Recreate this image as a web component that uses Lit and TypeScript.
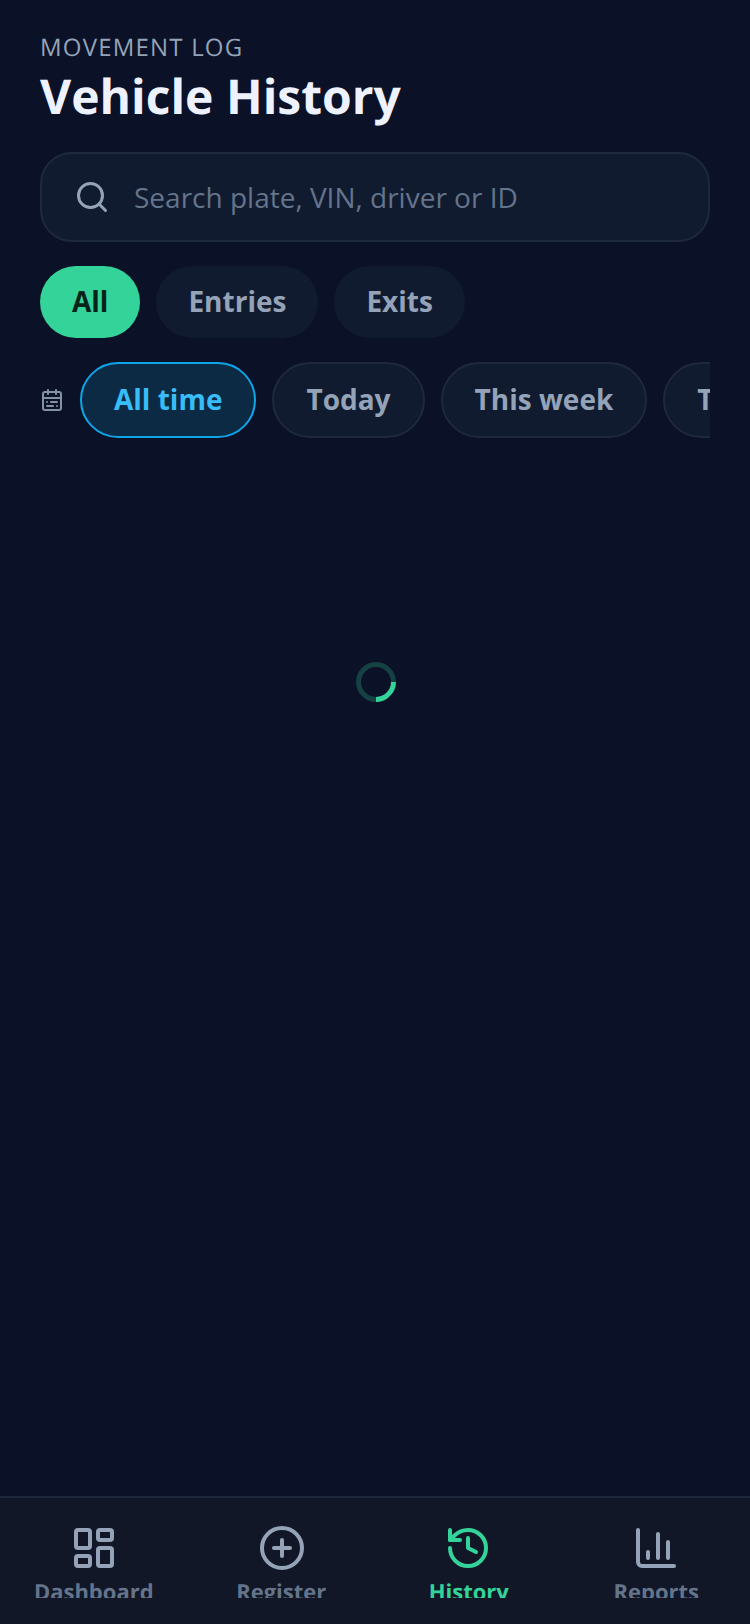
import { LitElement, html, css, svg } from "lit";
import { customElement, state } from "lit/decorators.js";
import { classMap } from "lit/directives/class-map.js";

const icon = (size: number, body: unknown) => html`
  <svg width=${size} height=${size} viewBox="0 0 24 24" fill="none" stroke="currentColor"
    stroke-width="2" stroke-linecap="round" stroke-linejoin="round">${body}</svg>
`;

const NAV = [
  {
    label: "Dashboard",
    body: svg`<rect width="7" height="9" x="3" y="3" rx="1"/><rect width="7" height="5" x="14" y="3" rx="1"/><rect width="7" height="9" x="14" y="12" rx="1"/><rect width="7" height="5" x="3" y="16" rx="1"/>`,
  },
  {
    label: "Register",
    body: svg`<circle cx="12" cy="12" r="10"/><path d="M8 12h8"/><path d="M12 8v8"/>`,
  },
  {
    label: "History",
    active: true,
    body: svg`<path d="M3 12a9 9 0 1 0 9-9 9.75 9.75 0 0 0-6.74 2.74L3 8"/><path d="M3 3v5h5"/><path d="M12 7v5l4 2"/>`,
  },
  {
    label: "Reports",
    body: svg`<path d="M3 3v16a2 2 0 0 0 2 2h16"/><path d="M18 17V9"/><path d="M13 17V5"/><path d="M8 17v-3"/>`,
  },
];

@customElement("app-root")
export class AppRoot extends LitElement {
  @state() kind = "All";
  @state() range = "All time";

  static styles = css`
    :host {
      display: block;
      font-family: "Open Sans", "Noto Sans", sans-serif;
      text-rendering: geometricPrecision;
      background: #0b1126;
    }
    .page {
      height: 1624px;
      display: flex;
      flex-direction: column;
    }
    .main {
      flex: 1;
      min-height: 0;
      display: flex;
      flex-direction: column;
      padding: 32px 40px 0;
    }
    .eyebrow {
      font-size: 24px;
      line-height: 32px;
      letter-spacing: 1.2px;
      color: #94a3b8;
    }
    h1 {
      margin: 1px 0 0;
      font-size: 48px;
      line-height: 64px;
      font-weight: 700;
      color: #eef2ff;
    }
    .search {
      margin-top: 23px;
      height: 90px;
      box-sizing: border-box;
      display: flex;
      align-items: center;
      gap: 24px;
      padding: 0 32px;
      border: 2px solid #1e293b;
      border-radius: 32px;
      background: #111b2f;
      color: #94a3b8;
    }
    .search svg {
      flex: none;
    }
    .search input {
      flex: 1;
      min-width: 0;
      border: 0;
      padding: 0;
      outline: 0;
      background: transparent;
      font: inherit;
      font-size: 28px;
      color: #f1f5f9;
    }
    .search input::placeholder {
      color: #64748b;
      opacity: 1;
    }
    .chips {
      margin-top: 24px;
      display: flex;
      gap: 16px;
    }
    .chip {
      height: 72px;
      padding: 0 32px 2px;
      border: 0;
      border-radius: 36px;
      background: #111b2f;
      color: #94a3b8;
      font: inherit;
      font-size: 28px;
      font-weight: 700;
    }
    .chip.on {
      background: #34d399;
      color: #04241a;
    }
    .dates {
      margin-top: 24px;
      display: flex;
      align-items: center;
      gap: 16px;
      color: #8492a6;
    }
    .dates > svg {
      flex: none;
    }
    .scroller {
      flex: 1;
      min-width: 0;
      display: flex;
      gap: 16px;
      overflow: hidden;
    }
    .pill {
      flex: none;
      height: 76px;
      padding: 0 32px 2px;
      border: 2px solid #1e293b;
      border-radius: 38px;
      background: #111b2f;
      color: #94a3b8;
      font: inherit;
      font-size: 28px;
      font-weight: 700;
    }
    .pill.on {
      background: #0c2a44;
      border-color: #0ea5e9;
      color: #38bdf8;
    }
    .loading {
      flex: 1;
      display: flex;
      justify-content: center;
      padding: 224px 0 0 2px;
    }
    .spinner {
      width: 40px;
      height: 40px;
      box-sizing: border-box;
      border: 5px solid rgba(52, 211, 153, 0.25);
      border-top-color: #34d399;
      border-radius: 50%;
      transform: rotate(135deg);
    }
    nav {
      height: 128px;
      box-sizing: border-box;
      flex: none;
      display: grid;
      grid-template-columns: repeat(4, 1fr);
      border-top: 2px solid #1e293b;
      background: #111726;
    }
    .tab {
      height: 100px;
      overflow: hidden;
      box-sizing: border-box;
      padding-top: 26px;
      display: flex;
      flex-direction: column;
      align-items: center;
      color: #94a3b8;
    }
    .tab svg {
      flex: none;
    }
    .tab:nth-child(2) svg {
      margin-left: 1.5px;
    }
    .tab:nth-child(3) svg {
      margin-right: 1.5px;
    }
    .tab span {
      flex: none;
      font-size: 22px;
      line-height: 30px;
      font-weight: 700;
      margin-top: 5px;
      color: #64748b;
    }
    .tab.on,
    .tab.on span {
      color: #34d399;
    }
  `;

  render() {
    const kinds = ["All", "Entries", "Exits"];
    const ranges = ["All time", "Today", "This week", "This month"];
    return html`
      <div class="page">
        <div class="main">
          <div class="eyebrow">MOVEMENT LOG</div>
          <h1>Vehicle History</h1>
          <label class="search">
            ${icon(36, svg`<circle cx="11" cy="11" r="8"/><path d="m21 21-4.3-4.3"/>`)}
            <input placeholder="Search plate, VIN, driver or ID" />
          </label>
          <div class="chips">
            ${kinds.map(
              (k) => html`<button class=${classMap({ chip: true, on: this.kind === k })}
                @click=${() => (this.kind = k)}>${k}</button>`
            )}
          </div>
          <div class="dates">
            ${icon(24, svg`<rect width="18" height="18" x="3" y="4" rx="2"/><path d="M16 2v4"/><path d="M3 10h18"/><path d="M8 2v4"/><path d="M17 14h-6"/><path d="M13 18H7"/><path d="M7 14h.01"/><path d="M17 18h.01"/>`)}
            <div class="scroller">
              ${ranges.map(
                (r) => html`<button class=${classMap({ pill: true, on: this.range === r })}
                  @click=${() => (this.range = r)}>${r}</button>`
              )}
            </div>
          </div>
          <div class="loading"><div class="spinner"></div></div>
        </div>
        <nav>
          ${NAV.map(
            (n) => html`<div class=${classMap({ tab: true, on: !!n.active })}>
              ${icon(48, n.body)}
              <span>${n.label}</span>
            </div>`
          )}
        </nav>
      </div>
    `;
  }
}
